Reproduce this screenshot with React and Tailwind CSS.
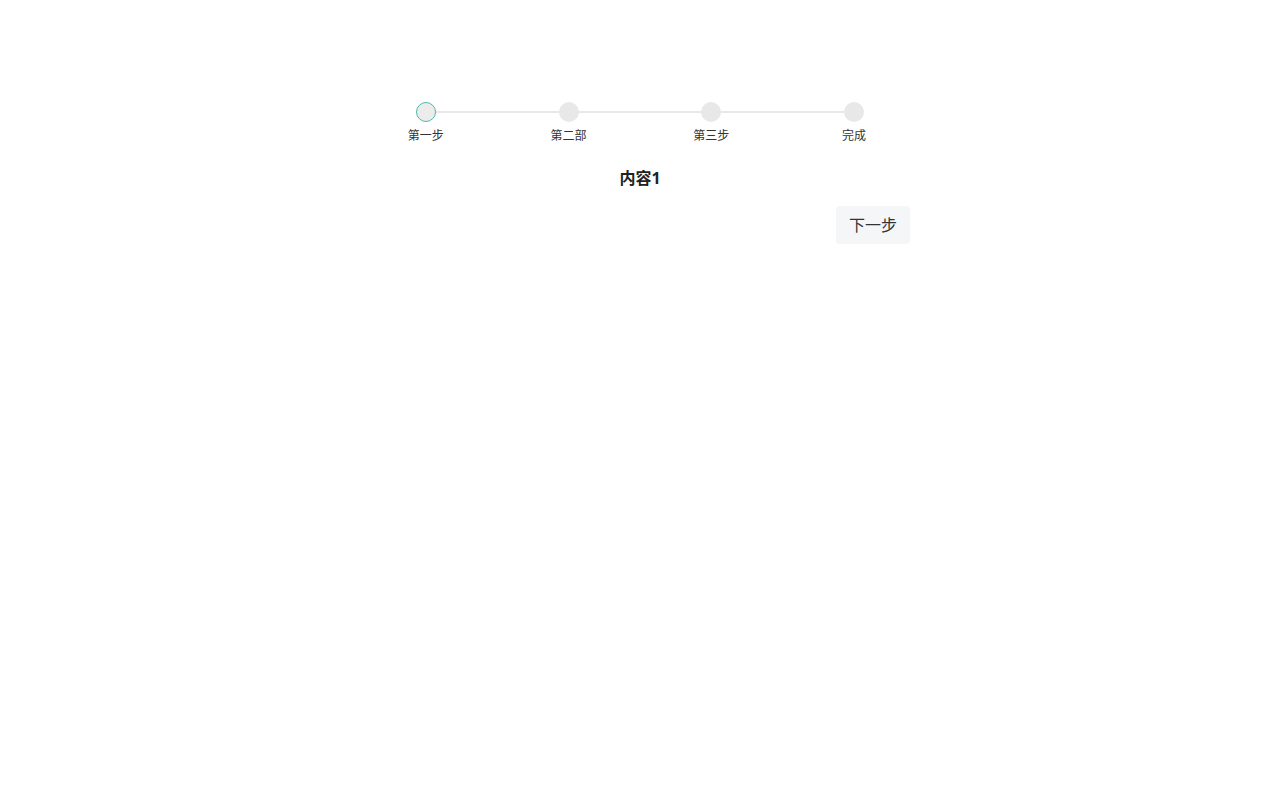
import React, { useState } from 'react';

const steps = ['第一步', '第二部', '第三步', '完成'];

function Steps({ current }) {
  return (
    <div className="grid w-[571px] grid-cols-4">
      {steps.map((label, i) => (
        <div key={label} className="flex flex-col items-center">
          <div className="flex w-full items-center">
            <div className={`h-[2px] flex-1 ${i === 0 ? 'bg-transparent' : 'bg-[#e8e8e8]'}`} />
            <div
              className={`h-5 w-5 shrink-0 rounded-full bg-[#e8e8e8] ${
                i === current ? 'border border-[#4fb8ad] bg-[#ececec]' : ''
              }`}
            />
            <div className={`h-[2px] flex-1 ${i === steps.length - 1 ? 'bg-transparent' : 'bg-[#e8e8e8]'}`} />
          </div>
          <div className="mt-[6px] text-[12px] leading-4 text-[#333]">{label}</div>
        </div>
      ))}
    </div>
  );
}

export default function App() {
  const [current, setCurrent] = useState(0);

  return (
    <main
      className="min-h-screen bg-white pt-[102px]"
      style={{ fontFamily: '"Noto Sans", "Noto Sans CJK SC", sans-serif' }}
    >
      <div className="mx-auto flex w-[571px] flex-col items-center">
        <Steps current={current} />
        <div className="mt-[22px] text-[16px] font-bold leading-6 text-[#222]">内容{current + 1}</div>
        <div className="mt-4 flex w-[540px] justify-end">
          <button
            type="button"
            onClick={() => setCurrent((c) => Math.min(c + 1, steps.length - 1))}
            className="rounded bg-[#f5f6f7] px-[13px] py-[7px] text-[16px] leading-6 text-[#333]"
          >
            下一步
          </button>
        </div>
      </div>
    </main>
  );
}
